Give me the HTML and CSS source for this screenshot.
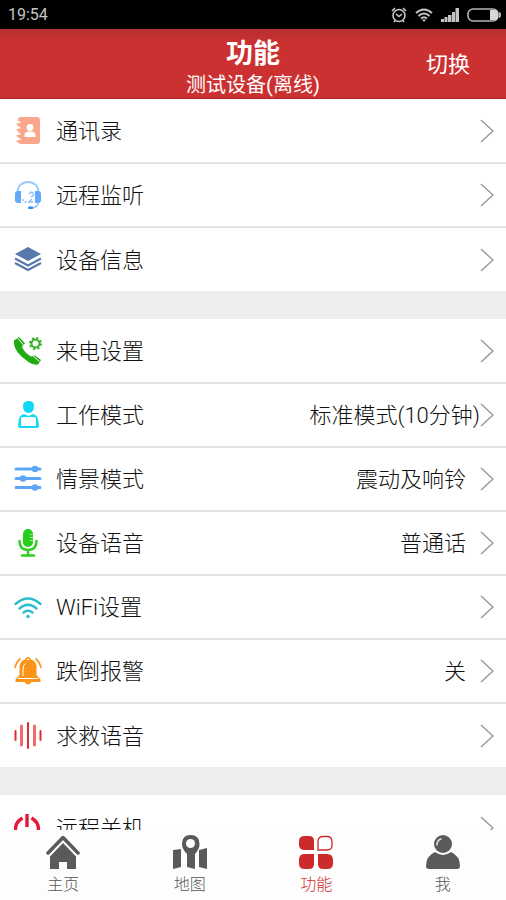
FILE: index.html
```html
<!DOCTYPE html>
<html lang="zh-CN">
<head>
<meta charset="utf-8">
<meta name="viewport" content="width=device-width, initial-scale=1">
<title>功能</title>
<link rel="stylesheet" href="styles.css">
</head>
<body>
<svg class="defs" aria-hidden="true">
  <symbol id="chevron" viewBox="0 0 14 24"><path d="M1 1l12 11L1 23" fill="none" stroke="#999" stroke-width="1.5"/></symbol>
</svg>

<div class="status">
  <span class="time">19:54</span>
  <svg class="alarm" viewBox="0 0 16 16" fill="none" stroke="#c4c4c4" stroke-width="1.6"><circle cx="8" cy="8.5" r="6"/><path d="M1 4l3-3M15 4l-3-3M3 15l1.500-2M13 15l-1.500-2M5 7l3 2.500L11 7"/></svg>
  <svg class="wifi" viewBox="0 0 18 14" fill="none" stroke="#c4c4c4" stroke-width="2"><path d="M1 5q8-7 16 0M3.500 8q5.500-5 11 0M6 10.500q3-2.500 6 0"/><path d="M7 11.500h4L9 14z" fill="#c4c4c4" stroke="none"/></svg>
  <svg class="signal" viewBox="0 0 18 14" fill="#c4c4c4"><path d="M0 14v-3h3v3zM3.500 14V9h3v5zM7 14V7h3.500v7zM11 14V4h3v10zM14.500 14V0H18v14z"/></svg>
  <svg class="battery" viewBox="0 0 34 14"><rect x="1" y="1" width="30" height="12" rx="5" fill="none" stroke="#b4b4b4" stroke-width="1.6"/><path d="M23 2h5q3 0 3 3v4q0 3-3 3h-5z" fill="#d8d8d8"/><path d="M32 4q2 0 2 3t-2 3z" fill="#b4b4b4"/></svg>
</div>

<header class="header">
  <div class="heading">
    <h1>功能</h1>
    <p>测试设备(离线)</p>
  </div>
  <button class="switch" type="button">切换</button>
</header>

<main class="content">
  <section class="group">
    <a class="row" href="#contacts">
      <svg class="icon" viewBox="0 0 28 28"><rect x="4" y="0" width="22" height="27" rx="3" fill="#f9a78d"/><g fill="#fff"><circle cx="5" cy="5.500" r="1.600"/><circle cx="5" cy="11" r="1.600"/><circle cx="5" cy="17" r="1.600"/><circle cx="5" cy="22.500" r="1.600"/><circle cx="16" cy="10.500" r="3.400"/><path d="M10.500 20v-3q1-2.500 3.500-2.500h4q2.500 0 3.500 2.500v3z"/></g><path d="M2.500 7.500l4-1M2.500 13l4-1M2.500 19l4-1M2.500 24.500l4-1" stroke="#f9a78d" stroke-width="1.300"/></svg>
      <span class="label">通讯录</span>
      <svg class="chevron"><use href="#chevron"/></svg>
    </a>
    <a class="row" href="#listen">
      <svg class="icon" viewBox="0 0 28 28"><path d="M3.500 11C3.500 5 8 1 14 1s10.500 4 10.500 10" fill="none" stroke="#9bcbfb" stroke-width="1.800"/><path d="M7 10v12H4q-3 0-3-3v-6q0-3 3-3zM21 10v12h3q3 0 3-3v-6q0-3-3-3z" fill="#64aafa"/><path d="M24.500 22q-1.500 5-8 5M15 13q2-3 4-1t-2 4M18 18l-3 3h4M9 20v-2M11 22l1-2" fill="none" stroke="#8bc0fb" stroke-width="1.400"/><rect x="14" y="25.500" width="5" height="2.500" rx="1" fill="#2f8cf5"/></svg>
      <span class="label">远程监听</span>
      <svg class="chevron"><use href="#chevron"/></svg>
    </a>
    <a class="row" href="#device">
      <svg class="icon" viewBox="0 0 28 28"><path d="M14 1l13 7-13 7L1 8z" fill="#5878ac"/><path d="M1 12.500l13 7 13-7M1 17l13 7 13-7" fill="none" stroke="#5878ac" stroke-width="2"/></svg>
      <span class="label">设备信息</span>
      <svg class="chevron"><use href="#chevron"/></svg>
    </a>
  </section>

  <section class="group">
    <a class="row" href="#calls">
      <svg class="icon" viewBox="0 0 28 28"><path d="M0 3.500L5 0l6 6.500-3 3q2 6 9 10l4-1 6 4.500-3 4.500q-6 1-12-4.500Q-1 14 0 3.500z" fill="#22aa12"/><path d="M3.500 1l6 7M18.500 18.500l7 6" stroke="#fff" stroke-width="1"/><circle cx="21.500" cy="6.500" r="4" fill="none" stroke="#35b226" stroke-width="2"/><circle cx="21.500" cy="6.500" r="5.600" fill="none" stroke="#35b226" stroke-width="1.800" stroke-dasharray="2.200 2.200"/></svg>
      <span class="label">来电设置</span>
      <svg class="chevron"><use href="#chevron"/></svg>
    </a>
    <a class="row" href="#work-mode">
      <svg class="icon" viewBox="0 0 28 28" fill="#12d8f8"><path d="M9 5q0-5 5.500-5Q20 0 20 5q0 7-5.500 7Q9 12 9 5z"/><path d="M10 13l4.500 2 4.500-2q4 1 5 5l1 6q0 3-2 3h-1v-9q0-2-2-2H9q-2 0-2 2v9H6q-2 0-2-3l1-6q1-4 5-5z"/><path d="M7 25h15v2H7z"/></svg>
      <span class="label">工作模式</span>
      <span class="value value-long">标准模式(10分钟)</span>
      <svg class="chevron"><use href="#chevron"/></svg>
    </a>
    <a class="row" href="#profile">
      <svg class="icon" viewBox="0 0 28 28" fill="#5da7f8"><path d="M2 4h24M2 13.500h24M2 22.500h24" stroke="#5da7f8" stroke-width="3" stroke-linecap="round"/><circle cx="21" cy="4" r="3.300"/><circle cx="9" cy="13.500" r="3.300"/><circle cx="21" cy="22.500" r="3.300"/></svg>
      <span class="label">情景模式</span>
      <span class="value">震动及响铃</span>
      <svg class="chevron"><use href="#chevron"/></svg>
    </a>
    <a class="row" href="#voice">
      <svg class="icon" viewBox="0 0 28 28"><rect x="9" y="0" width="10" height="18" rx="5" fill="#28cf1b"/><path d="M5.500 12q0 9 8.500 9t8.500-9M14 21v5M8 26.500h12" fill="none" stroke="#28cf1b" stroke-width="2.400" stroke-linecap="round"/><path d="M16 5.500h3M16 8.500h3M16 11.500h3" stroke="#9be995" stroke-width="1"/></svg>
      <span class="label">设备语音</span>
      <span class="value">普通话</span>
      <svg class="chevron"><use href="#chevron"/></svg>
    </a>
    <a class="row" href="#wifi">
      <svg class="icon" viewBox="0 0 28 28"><path d="M1.500 11q12.500-11 25 0M5.500 15.500q8.500-7.500 17 0M9.500 19.500q4.500-3.500 9 0" fill="none" stroke="#2cbdca" stroke-width="2.400" stroke-linecap="round"/><circle cx="14" cy="23.500" r="1.800" fill="#2cbdca"/></svg>
      <span class="label">WiFi设置</span>
      <svg class="chevron"><use href="#chevron"/></svg>
    </a>
    <a class="row" href="#fall-alarm">
      <svg class="icon" viewBox="0 0 28 28"><path d="M14 0q2.500 0 3 2.500Q22.500 4 22.500 10.500V18l4 4.500V25h-25v-2.500l4-4.500v-7.500Q5.500 4 11 2.500 11.500 0 14 0zM11 25h6q-.5 2.500-3 2.500T11 25z" fill="#fb9418"/><path d="M6.500 1.500Q2 5 1 11M21.500 1.500Q26 5 27 11" fill="none" stroke="#fb9418" stroke-width="1.600"/><path d="M9 19v-7q0-4 2.500-5.500M4 21.500h20M13 2.500h2" fill="none" stroke="#fff" stroke-width="1"/></svg>
      <span class="label">跌倒报警</span>
      <span class="value">关</span>
      <svg class="chevron"><use href="#chevron"/></svg>
    </a>
    <a class="row" href="#sos">
      <svg class="icon" viewBox="0 0 28 28" fill="none" stroke-width="2" stroke-linecap="round"><path d="M1.500 9v9M14 1v25M26.500 9v9" stroke="#e02a35"/><path d="M7.500 4v19M20.500 4v19" stroke="#f06a6e" stroke-width="3"/></svg>
      <span class="label">求救语音</span>
      <svg class="chevron"><use href="#chevron"/></svg>
    </a>
  </section>

  <section class="group">
    <a class="row" href="#shutdown">
      <svg class="icon" viewBox="0 0 28 28" fill="none" stroke="#e3193a" stroke-width="3.400"><path d="M13 0v13M8.500 4Q1.500 8 1.500 15q0 11 11.500 11t11.500-11q0-7-7-11"/></svg>
      <span class="label">远程关机</span>
      <svg class="chevron"><use href="#chevron"/></svg>
    </a>
  </section>
</main>

<nav class="tabs">
  <a class="tab" href="#home">
    <svg viewBox="0 0 34 34" fill="#5a5a5a"><path d="M2 18L17 2.500 32 18" fill="none" stroke="#5a5a5a" stroke-width="3.500" stroke-linecap="round" stroke-linejoin="round"/><path d="M17 8l13 13.500V34h-9v-7h-8v7H4V21.500z"/></svg>
    <span>主页</span>
  </a>
  <a class="tab" href="#map">
    <svg viewBox="0 0 34 34" fill="#5a5a5a"><path d="M0 15l8-1v18l-8 2zM34 13l-8 2v17l8 2z"/><path d="M17.500 0q9 0 9 9 0 5-4.500 10v15l-8-2V19Q9 14 9 9q0-9 8.500-9z"/><circle cx="17.500" cy="8.500" r="4.500" fill="#fff"/></svg>
    <span>地图</span>
  </a>
  <a class="tab tab-active" href="#features" aria-current="page">
    <svg viewBox="0 0 34 34" fill="#cc2a2d"><path d="M6 1h4q5 0 5 5v9H6q-6 0-6-5V6q0-5 6-5zM5 19h10v10q0 5-5 5H6q-6 0-6-5v-4q0-6 5-6zM19 19h9q6 0 6 6v4q0 5-6 5h-4q-5 0-5-5z"/><path d="M24 1.500h4q5 0 5 5v4q0 4.500-5 4.500h-9V6.500q0-5 5-5z" fill="#fff" stroke="#cc2a2d" stroke-width="1.300"/></svg>
    <span>功能</span>
  </a>
  <a class="tab" href="#me">
    <svg viewBox="0 0 34 34" fill="#5a5a5a"><circle cx="17" cy="9" r="9"/><path d="M9 17q8 6 16 0 9 4 9 14 0 3-3 3H3q-3 0-3-3 0-10 9-14z"/><path d="M11 10q0-5 4-6" fill="none" stroke="#ddd" stroke-width="1.600" stroke-linecap="round"/></svg>
    <span>我</span>
  </a>
</nav>
</body>
</html>
```

FILE: styles.css
```css
* {
  box-sizing: border-box;
}

body {
  display: flex;
  flex-direction: column;
  height: 100vh;
  margin: 0;
  overflow: hidden;
  background: #fff;
  color: #111;
  font-family: Roboto, "Noto Sans CJK SC", sans-serif;
  font-weight: 300;
}

a {
  color: inherit;
  text-decoration: none;
}

.defs {
  position: absolute;
  width: 0;
  height: 0;
}

.status {
  display: flex;
  flex: none;
  align-items: center;
  gap: 8px;
  height: 29px;
  padding: 0 5px 0 8px;
  background: #000;
  color: #c4c4c4;
  font-size: 16px;
  font-weight: 400;
}

.time {
  margin-right: auto;
}

.alarm {
  width: 16px;
  height: 16px;
}

.wifi,
.signal {
  width: 18px;
  height: 14px;
}

.battery {
  width: 34px;
  height: 14px;
}

.header {
  display: grid;
  flex: none;
  grid-template-columns: 1fr auto 1fr;
  align-items: center;
  height: 70px;
  background: linear-gradient(#b92f2f, #cc3131 16px);
  border-bottom: 1px solid #b52025;
  color: #fff;
}

.heading {
  grid-column: 2;
  padding-top: 8px;
  text-align: center;
}

.heading h1,
.heading p {
  margin: 0;
}

.heading h1 {
  font-size: 27px;
  font-weight: 700;
  line-height: 34px;
}

.heading p {
  font-size: 20px;
  font-weight: 400;
  line-height: 28px;
}

.switch {
  justify-self: end;
  margin-right: 36px;
  padding: 0 0 4px;
  border: 0;
  background: none;
  color: #fff;
  font: inherit;
  font-size: 22px;
  font-weight: 400;
}

.content {
  display: flex;
  flex: 1;
  flex-direction: column;
  gap: 28px;
  min-height: 0;
  overflow-y: auto;
  scrollbar-width: none;
  background: #eee;
}

.group {
  flex: none;
  padding-top: 1px;
  background: #fff;
}

.row {
  display: flex;
  align-items: center;
  height: 64px;
  padding: 0 12px 0 14px;
  border-bottom: 2px solid #e4e4e4;
  font-size: 22px;
  line-height: 32px;
}

.row:last-child {
  height: 63px;
  border-bottom: 0;
}

.icon {
  flex: none;
  width: 28px;
  height: 28px;
  margin-right: 14px;
}

.label,
.value {
  padding-top: 2px;
}

.label {
  margin-right: auto;
}

.value {
  margin-right: 14px;
}

.value-long {
  margin-right: 0;
}

.chevron {
  flex: none;
  width: 14px;
  height: 24px;
}

.tabs {
  display: flex;
  flex: none;
  height: 70px;
  padding-top: 5px;
  background: #fdfdfd;
}

.tab {
  display: flex;
  flex: 1;
  flex-direction: column;
  align-items: center;
  gap: 4px;
  color: #555;
  font-size: 16px;
  line-height: 24px;
}

.tab svg {
  width: 34px;
  height: 34px;
}

.tab-active {
  color: #cc2a2d;
}
```
